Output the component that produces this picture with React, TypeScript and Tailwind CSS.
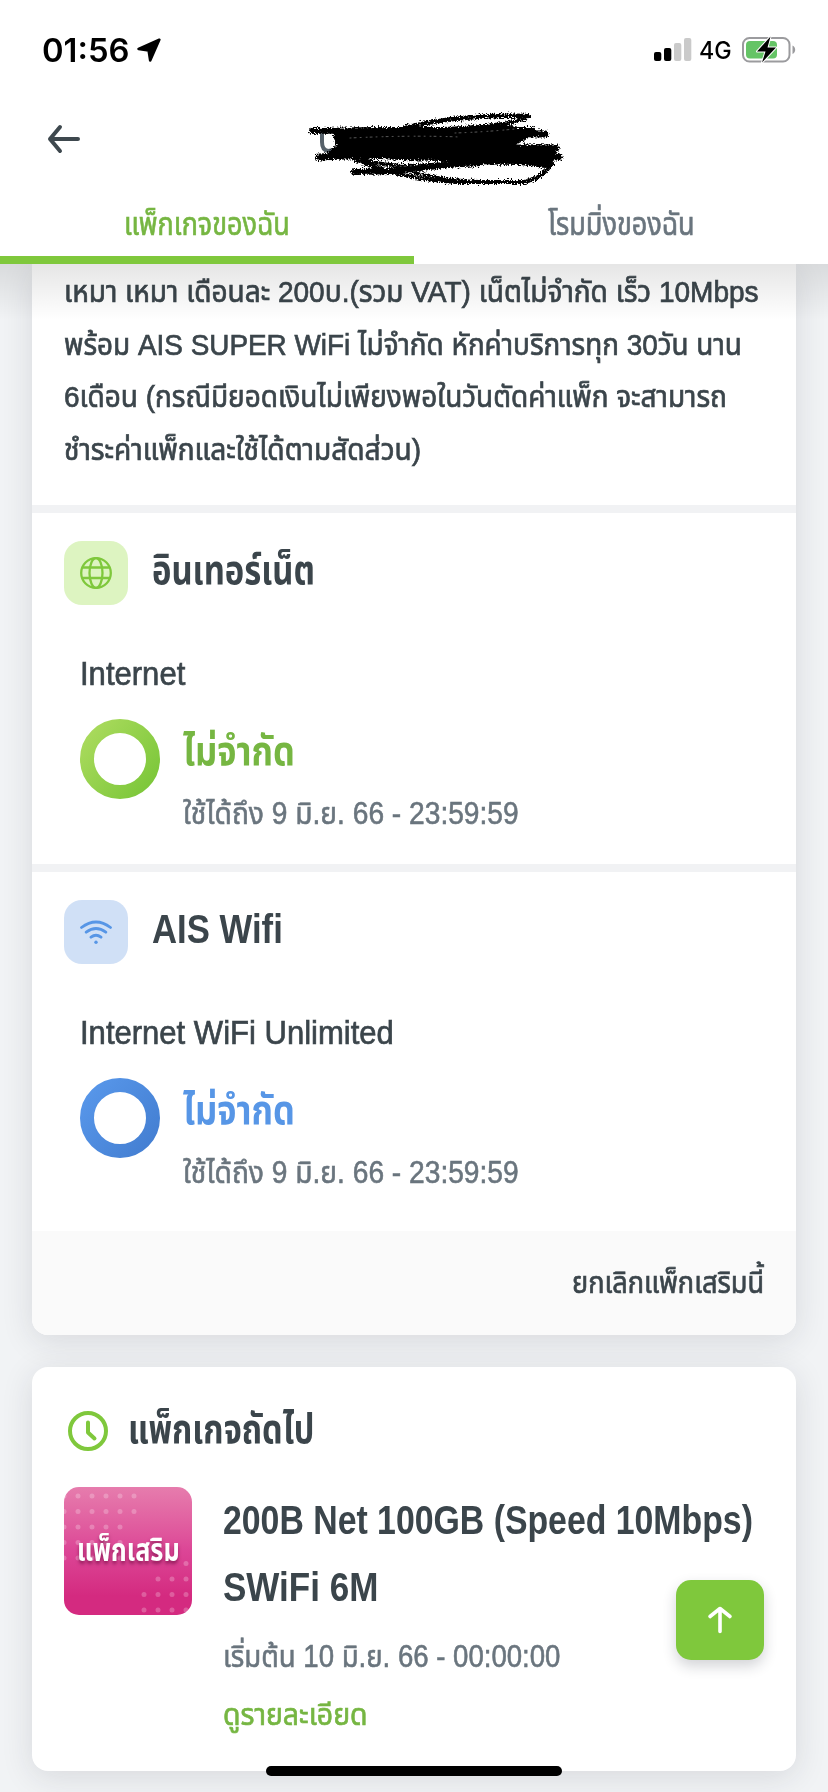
import { useLayoutEffect, useRef, useState } from "react";
import type { ReactNode } from "react";

/** One line of text, condensed horizontally so that it occupies `width` pixels. */
function Line({ width, className = "", children }: { width: number; className?: string; children: ReactNode }) {
  const ref = useRef<HTMLSpanElement>(null);
  const [scale, setScale] = useState(1);
  useLayoutEffect(() => {
    if (ref.current) setScale(width / ref.current.offsetWidth);
  }, [width]);
  return (
    <div className={`whitespace-nowrap ${className}`} style={{ width }}>
      <span ref={ref} className="inline-block origin-left" style={{ transform: `scaleX(${scale})` }}>
        {children}
      </span>
    </div>
  );
}

function StatusBar() {
  return (
    <div className="flex h-[100px] items-center pl-[42px] pr-[32px] font-['Inter',sans-serif] text-black">
      <Line width={87} className="pt-[2px] text-[32px] font-semibold leading-[38px]">01:56</Line>
      <svg className="ml-[8px] h-[24px] w-[24px]" viewBox="0 0 24 24">
        <path d="M22.3 1.7 1.6 10.9l10 1.5 1.6 10.1z" fill="black" stroke="black" strokeWidth="2.6" strokeLinejoin="round" />
      </svg>
      <svg className="ml-auto h-[24px] w-[38px]" viewBox="0 0 38 24">
        <rect x="0" y="14" width="7.3" height="9" rx="2" />
        <rect x="10" y="10" width="7.3" height="13" rx="2" />
        <rect x="20" y="5" width="7.3" height="18" rx="2" fill="#cacaca" />
        <rect x="30" y="0" width="7.3" height="23" rx="2" fill="#cacaca" />
      </svg>
      <Line width={33} className="ml-[7px] pt-[2px] text-[24px] font-medium leading-[28px]">4G</Line>
      <svg className="ml-[10px] h-[28px] w-[54px]" viewBox="0 0 54 28">
        <rect x="1" y="2" width="46.5" height="23.5" rx="6.5" fill="none" stroke="#9b9b9e" strokeWidth="2" />
        <rect x="4" y="5" width="31" height="17.5" rx="4" fill="#65c466" />
        <path d="M50.5 9.5c3.6 1.2 3.6 7.300 0 8.500z" fill="#9b9b9e" />
        <path d="M28.500 0.500 15 15.500h8.500L20 26.500 34 11.500h-8.500z" fill="black" stroke="white" strokeWidth="2" strokeLinejoin="round" paintOrder="stroke" />
      </svg>
    </div>
  );
}

function Scribble() {
  return (
    <svg className="h-[90px] w-[290px]" viewBox="290 105 290 90" fill="none" strokeLinecap="round" strokeLinejoin="round">
      <defs>
        <filter id="rough" x="-5%" y="-10%" width="110%" height="120%">
          <feTurbulence type="fractalNoise" baseFrequency="0.7" numOctaves="2" seed="4" result="n" />
          <feDisplacementMap in="SourceGraphic" in2="n" scale="7" xChannelSelector="R" yChannelSelector="G" />
        </filter>
      </defs>
      <path d="M322 134v8q0 8 6 9l6-1" stroke="#56616a" strokeWidth="4" />
      <g filter="url(#rough)" stroke="black">
        <path d="M332 131 352 128 413 127 450 128 503 123 532 131 528 138 514 146 556 149 558 158 546 168 520 165 470 164 440 161 400 160 360 158 328 157 328 151 336 145z" fill="black" stroke="none" />
        <path d="M312 131q50-1 100-1t120 0" strokeWidth="6" />
        <path d="M319 157q50-2 120-2t120 2" strokeWidth="7" />
        <path d="M405 128q55-14 123-12" strokeWidth="4.500" />
        <path d="M430 129q62-2 96-10" strokeWidth="3" />
        <path d="M440 137q60-4 105-3" strokeWidth="7" />
        <path d="M440 152q60-5 116-4" strokeWidth="7" />
        <path d="M354 172q36 0 66-4t60-5" strokeWidth="6" />
        <path d="M356 160q50 20 100 22h68q17-3 28-18" strokeWidth="4" />
        <path d="M362 160q25 6 44 6t50-3" strokeWidth="4" />
        <path d="M412 172q32 9 78 10" strokeWidth="3" />
      </g>
      <path d="M350 138q60-3 110-1M455 133q30-1 60-4M384 166q20 1 36-1" stroke="white" strokeOpacity="0.35" strokeWidth="1" strokeDasharray="1 3 2 4 1 5" />
    </svg>
  );
}

function Header() {
  return (
    <header className="relative z-10 h-[264px] bg-white">
      <StatusBar />
      <div className="flex h-[90px] items-start">
        <svg className="ml-[46px] mt-[23px] h-[32px] w-[36px]" viewBox="0 0 36 32" fill="none" stroke="#3e484e" strokeWidth="4" strokeLinecap="round" strokeLinejoin="round">
          <path d="M32 16H4M14 4 4 16l10 12" />
        </svg>
        <div className="ml-[208px] mt-[5px]"><Scribble /></div>
      </div>
      <nav className="flex h-[66px] pt-[1px] text-[32px] leading-[66px] [-webkit-text-stroke:0.7px]">
        <div className="flex flex-1 justify-center">
          <Line width={166} className="text-[#76b642]">แพ็กเกจของฉัน</Line>
        </div>
        <div className="flex flex-1 justify-center">
          <Line width={147} className="text-[#6a757e]">โรมมิ่งของฉัน</Line>
        </div>
      </nav>
      <div className="h-[8px] w-1/2 bg-[#7fc83c]" />
      <div className="pointer-events-none absolute inset-x-0 top-full h-[56px] bg-linear-to-b from-black/10 to-transparent" />
    </header>
  );
}

function GlobeIcon() {
  return (
    <svg className="h-[32px] w-[32px]" viewBox="0 0 32 32" fill="none" stroke="#7fc83c" strokeWidth="2.300">
      <circle cx="16" cy="16" r="14.800" />
      <ellipse cx="16" cy="16" rx="6.500" ry="14.800" />
      <path d="M2.500 10.500h27M2.500 21h27" />
    </svg>
  );
}

function WifiIcon() {
  return (
    <svg className="h-[32px] w-[32px]" viewBox="0 0 32 32" fill="none" stroke="#5796e6" strokeWidth="2.800" strokeLinecap="round">
      <path d="M1.500 11.500q14.500-11 29 0M6.200 16.200q9.800-7.400 19.600 0M11 21.200q5-4 10 0" />
      <circle cx="16" cy="26.300" r="1.700" fill="#5796e6" stroke="none" />
    </svg>
  );
}

function Ring({ id, from, to }: { id: string; from: string; to: string }) {
  return (
    <svg className="h-[80px] w-[80px]" viewBox="0 0 80 80">
      <defs>
        <linearGradient id={id} x1="0" y1="0.100" x2="1" y2="0.900">
          <stop offset="0" stopColor={from} />
          <stop offset="1" stopColor={to} />
        </linearGradient>
      </defs>
      <circle cx="40" cy="40" r="33" fill="none" stroke={`url(#${id})`} strokeWidth="14" />
    </svg>
  );
}

interface UsageProps {
  icon: ReactNode;
  tile: string;
  title: string;
  titleWidth: number;
  name: string;
  nameWidth: number;
  ring: ReactNode;
  accent: string;
}

function Usage({ icon, tile, title, titleWidth, name, nameWidth, ring, accent }: UsageProps) {
  return (
    <section className="h-[351px] pl-[32px] pt-[28px]">
      <div className="flex">
        <div className={`flex h-[64px] w-[64px] items-center justify-center rounded-[18px] ${tile}`}>{icon}</div>
        <Line width={titleWidth} className="ml-[24px] text-[40px] font-bold leading-[58px]">{title}</Line>
      </div>
      <Line width={nameWidth} className="ml-[16px] mt-[44px] text-[34px] leading-[48px] [-webkit-text-stroke:0.7px]">{name}</Line>
      <div className="ml-[16px] mt-[22px] flex">
        {ring}
        <div className="ml-[23px]">
          <Line width={112} className={`text-[40px] font-bold leading-[64px] ${accent}`}>ไม่จำกัด</Line>
          <Line width={336} className="mt-[6px] text-[31px] leading-[50px] text-[#6a757e] [-webkit-text-stroke:0.6px]">ใช้ได้ถึง 9 มิ.ย. 66 - 23:59:59</Line>
        </div>
      </div>
    </section>
  );
}

const badgeDots = [
  ...[0, 1, 2, 3, 4].flatMap((r) => [0, 1, 2, 3, 4, 5].slice(0, r > 1 ? 5 : 6).map((c) => [c * 14, 9 + r * 15.5])),
  [122, 76.500],
  ...[0, 1, 2].flatMap((r) => [80, 94, 108, 122].slice(r === 0 ? 1 : 0).map((x) => [x, 92 + r * 15.5])),
];

function AddonBadge() {
  return (
    <div className="relative flex h-[128px] w-[128px] items-center justify-center overflow-hidden rounded-[15px] bg-linear-to-b from-[#e67cad] via-[#dc4596] via-50% to-[#d42a80] to-85%">
      <svg className="absolute inset-0 h-[128px] w-[128px]" viewBox="0 0 128 128">
        {badgeDots.map(([x, y], i) => (
          <circle key={i} cx={x} cy={y} r="2.500" fill="white" fillOpacity="0.24" />
        ))}
      </svg>
      <Line width={103} className="relative text-[31px] font-bold leading-[56px] text-white [text-shadow:0_3px_4px_rgba(90,0,50,0.55)]">แพ็กเสริม</Line>
    </div>
  );
}

export default function App() {
  return (
    <div className="relative h-[1792px] w-[828px] overflow-hidden bg-[#f1f3f5] font-['Liberation_Sans','Noto_Sans_Thai','Noto_Sans',sans-serif] text-[#3b454b]">
      <Header />
      <main className="px-[32px]">
        <article className="overflow-hidden rounded-b-[16px] bg-white shadow-[0_6px_32px_rgba(30,35,50,0.12)]">
          <div className="h-[241px] pl-[32px] pt-[2px] text-[30px] leading-[52.700px] [-webkit-text-stroke:0.7px]">
            <Line width={695}>เหมา เหมา เดือนละ 200บ.(รวม VAT) เน็ตไม่จำกัด เร็ว 10Mbps</Line>
            <Line width={678}>พร้อม AIS SUPER WiFi ไม่จำกัด หักค่าบริการทุก 30วัน นาน</Line>
            <Line width={663}>6เดือน (กรณีมียอดเงินไม่เพียงพอในวันตัดค่าแพ็ก จะสามารถ</Line>
            <Line width={357}>ชำระค่าแพ็กและใช้ได้ตามสัดส่วน)</Line>
          </div>
          <div className="h-[8px] bg-[#f1f2f4]" />
          <Usage
            icon={<GlobeIcon />}
            tile="bg-[#ddf4c1]"
            title="อินเทอร์เน็ต"
            titleWidth={163}
            name="Internet"
            nameWidth={105}
            ring={<Ring id="green" from="#a9da5c" to="#7cc73a" />}
            accent="text-[#76b642]"
          />
          <div className="h-[8px] bg-[#f1f2f4]" />
          <Usage
            icon={<WifiIcon />}
            tile="bg-[#d0e0f6]"
            title="AIS Wifi"
            titleWidth={131}
            name="Internet WiFi Unlimited"
            nameWidth={314}
            ring={<Ring id="blue" from="#5796e9" to="#447fd2" />}
            accent="text-[#5796e6]"
          />
          <div className="h-[8px]" />
          <footer className="flex h-[104px] justify-end bg-[#fafafa] pr-[32px]">
            <Line width={192} className="text-[31px] leading-[104px] [-webkit-text-stroke:0.7px]">ยกเลิกแพ็กเสริมนี้</Line>
          </footer>
        </article>

        <article className="mt-[32px] h-[404px] rounded-[16px] bg-white pl-[32px] pt-[32px] shadow-[0_6px_32px_rgba(30,35,50,0.12)]">
          <div className="flex h-[64px] items-center">
            <svg className="ml-[4px] h-[40px] w-[40px]" viewBox="0 0 40 40" fill="none" stroke="#7fc83c" strokeWidth="4" strokeLinecap="round" strokeLinejoin="round">
              <circle cx="20" cy="20" r="18" />
              <path d="M20 11.500V21.500l6.500 6" />
            </svg>
            <Line width={186} className="ml-[20px] pb-[4px] text-[40px] font-bold leading-[60px]">แพ็กเกจถัดไป</Line>
          </div>
          <div className="mt-[24px] flex">
            <AddonBadge />
            <div className="ml-[31px]">
              <Line width={530} className="text-[40px] font-bold leading-[67px]">200B Net 100GB (Speed 10Mbps)</Line>
              <Line width={155} className="text-[40px] font-bold leading-[67px]">SWiFi 6M</Line>
              <Line width={337} className="mt-[7px] text-[31px] leading-[58px] text-[#6a757e] [-webkit-text-stroke:0.6px]">เริ่มต้น 10 มิ.ย. 66 - 00:00:00</Line>
              <Line width={145} className="text-[31px] leading-[58px] text-[#76b642] [-webkit-text-stroke:0.7px]">ดูรายละเอียด</Line>
            </div>
          </div>
        </article>
      </main>

      <button className="absolute left-[676px] top-[1580px] flex h-[80px] w-[88px] items-center justify-center rounded-[15px] bg-[#7fc83c] shadow-[0_6px_14px_rgba(30,35,50,0.2)]">
        <svg className="h-[28px] w-[26px]" viewBox="0 0 26 28" fill="none" stroke="white" strokeWidth="3.600" strokeLinecap="round" strokeLinejoin="round">
          <path d="M13 25.500V3M3 10.500 13 2.500l10 8" />
        </svg>
      </button>
      <div className="absolute left-[266px] top-[1766px] h-[10px] w-[296px] rounded-full bg-black" />
    </div>
  );
}
